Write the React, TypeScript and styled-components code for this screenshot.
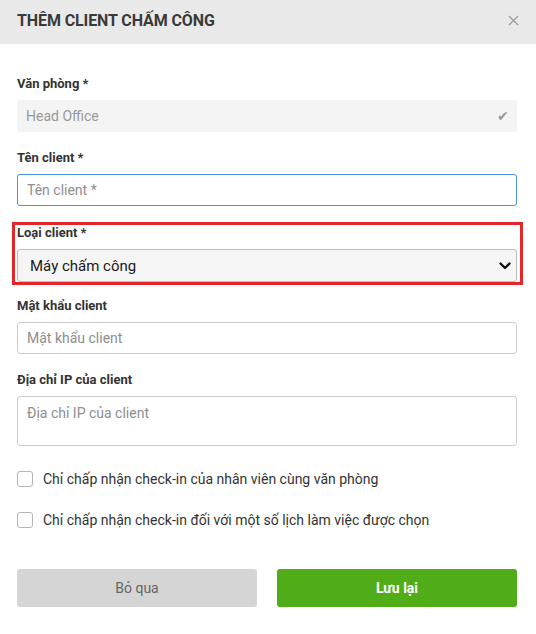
import React from "react";
import styled, { createGlobalStyle } from "styled-components";

const GlobalStyle = createGlobalStyle`
  html, body { margin: 0; padding: 0; background: #ffffff; }
  body { font-family: Roboto, "Noto Sans", "Liberation Sans", sans-serif; color: #333; }
  * { box-sizing: border-box; }
`;

const Modal = styled.div`
  width: 536px;
  height: 634px;
  background: #fff;
  display: flex;
  flex-direction: column;
`;

const Header = styled.div`
  height: 44px;
  background: #e9e9e9;
  display: flex;
  align-items: center;
  justify-content: space-between;
  padding: 0 17px 3px 17px;
`;

const Title = styled.h1`
  margin: 0;
  font-size: 16px;
  font-weight: 700;
  color: #3a3a3a;
  letter-spacing: -0.1px;
`;

const CloseButton = styled.button`
  border: none;
  background: transparent;
  padding: 0;
  margin-right: -2px;
  width: 16px;
  height: 16px;
  display: flex;
  align-items: center;
  justify-content: center;
  cursor: pointer;
`;

const Body = styled.div`
  padding: 32px 19px 0 17px;
  display: flex;
  flex-direction: column;
  gap: 18px;
`;

const Field = styled.div`
  display: flex;
  flex-direction: column;
  gap: 8px;
`;

const Highlight = styled(Field)`
  border: 3px solid #e3262a;
  padding: 0 3px 0 2px;
  margin: -2px -6px -5px -5px;
`;

const Label = styled.label`
  font-size: 13px;
  line-height: 16px;
  font-weight: 700;
  color: #333;
`;

const Input = styled.input<{ $focused?: boolean }>`
  height: 32px;
  width: 100%;
  border: 1px solid ${(p) => (p.$focused ? "#4a8fe2" : "#cccccc")};
  border-radius: 3px;
  padding: 0 9px;
  font-family: inherit;
  font-size: 14px;
  color: #333;
  outline: none;
  &::placeholder { color: #8e8e8e; }
`;

const ReadOnlyBox = styled.div`
  height: 32px;
  background: #f4f4f4;
  border-radius: 3px;
  display: flex;
  align-items: center;
  justify-content: space-between;
  padding: 0 8px 0 9px;
  font-size: 14px;
  color: #999;
`;

const Check = styled.span`
  font-size: 14px;
  color: #9a9a9a;
`;

const SelectWrap = styled.div`
  position: relative;
  height: 33px;
`;

const Select = styled.select`
  appearance: none;
  -webkit-appearance: none;
  width: 100%;
  height: 33px;
  border: 1px solid #bdbdbd;
  border-radius: 3px;
  background: #f5f5f5;
  padding: 0 30px 0 12px;
  font-family: inherit;
  font-size: 15px;
  color: #1a1a1a;
  outline: none;
`;

const Chevron = styled.svg`
  position: absolute;
  right: 6px;
  top: 13px;
  pointer-events: none;
`;

const TextArea = styled.textarea`
  height: 50px;
  width: 100%;
  resize: none;
  border: 1px solid #cccccc;
  border-radius: 3px;
  padding: 7px 9px;
  font-family: inherit;
  font-size: 14px;
  line-height: 18px;
  color: #333;
  outline: none;
  &::placeholder { color: #8e8e8e; }
`;

const Checks = styled.div`
  display: flex;
  flex-direction: column;
  gap: 25px;
  margin-top: 7px;
`;

const CheckRow = styled.label`
  display: flex;
  align-items: center;
  gap: 10px;
  font-size: 14px;
  color: #333;
  height: 16px;
`;

const Box = styled.span`
  width: 16px;
  height: 16px;
  border: 1px solid #b5b5b5;
  border-radius: 3px;
  background: #fff;
  flex: none;
`;

const Actions = styled.div`
  display: grid;
  grid-template-columns: 1fr 1fr;
  gap: 20px;
  margin-top: 23px;
`;

const Button = styled.button<{ $primary?: boolean }>`
  height: 38px;
  border: none;
  border-radius: 3px;
  background: ${(p) => (p.$primary ? "#51ad17" : "#d5d5d5")};
  color: ${(p) => (p.$primary ? "#ffffff" : "#666666")};
  font-family: inherit;
  font-size: 14px;
  font-weight: ${(p) => (p.$primary ? 700 : 400)};
  cursor: pointer;
`;

export default function App() {
  return (
    <>
      <GlobalStyle />
      <Modal>
        <Header>
          <Title>THÊM CLIENT CHẤM CÔNG</Title>
          <CloseButton aria-label="close">
            <svg width="11" height="11" viewBox="0 0 11 11">
              <path d="M1 1 L10 10 M10 1 L1 10" stroke="#9c9c9c" strokeWidth="1.3" fill="none" />
            </svg>
          </CloseButton>
        </Header>
        <Body>
          <Field>
            <Label>Văn phòng *</Label>
            <ReadOnlyBox>
              <span>Head Office</span>
              <Check>✔</Check>
            </ReadOnlyBox>
          </Field>
          <Field>
            <Label>Tên client *</Label>
            <Input $focused placeholder="Tên client *" />
          </Field>
          <Highlight>
            <Label>Loại client *</Label>
            <SelectWrap>
              <Select defaultValue="machine">
                <option value="machine">Máy chấm công</option>
              </Select>
              <Chevron width="12" height="8" viewBox="0 0 12 8">
                <path d="M1.5 1.5 L6 6 L10.5 1.5" stroke="#111" strokeWidth="2.4" fill="none" strokeLinecap="round" strokeLinejoin="round" />
              </Chevron>
            </SelectWrap>
          </Highlight>
          <Field>
            <Label>Mật khẩu client</Label>
            <Input placeholder="Mật khẩu client" />
          </Field>
          <Field>
            <Label>Địa chỉ IP của client</Label>
            <TextArea placeholder="Địa chỉ IP của client" />
          </Field>
          <Checks>
            <CheckRow>
              <Box />
              <span>Chỉ chấp nhận check-in của nhân viên cùng văn phòng</span>
            </CheckRow>
            <CheckRow>
              <Box />
              <span>Chỉ chấp nhận check-in đối với một số lịch làm việc được chọn</span>
            </CheckRow>
          </Checks>
          <Actions>
            <Button>Bỏ qua</Button>
            <Button $primary>Lưu lại</Button>
          </Actions>
        </Body>
      </Modal>
    </>
  );
}
